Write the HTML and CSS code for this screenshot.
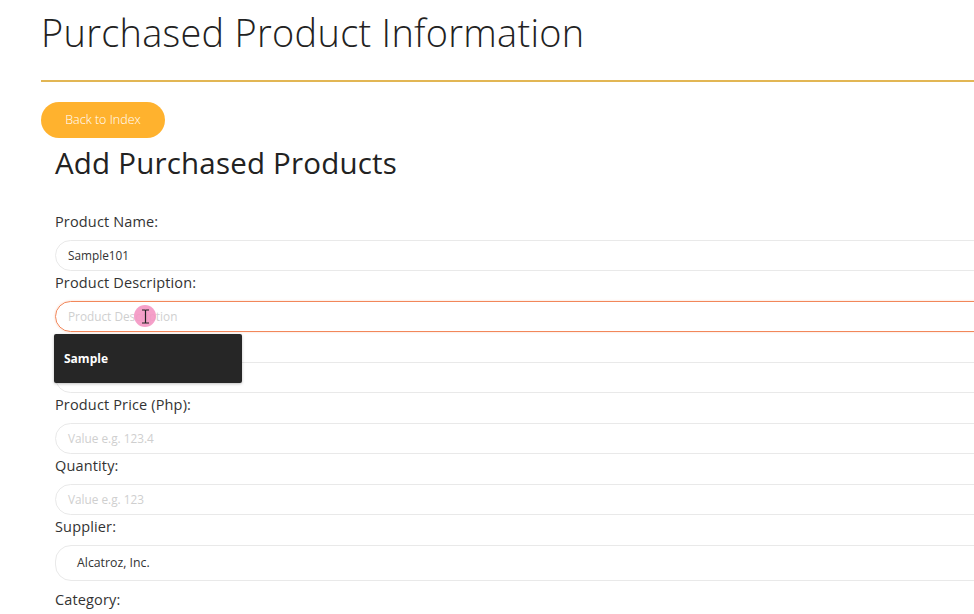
FILE: index.html
```html
<!DOCTYPE html>
<html lang="en">
<head>
<meta charset="utf-8">
<title>Purchased Product Information</title>
<link rel="stylesheet" href="styles.css">
</head>
<body>
<div class="page">
  <h1 class="title">Purchased Product Information</h1>
  <hr class="rule">
  <a class="back-btn" href="#">Back to Index</a>
  <div class="form-wrap">
    <h2 class="subtitle">Add Purchased Products</h2>
    <form class="form">
      <label class="label">Product Name:</label>
      <div class="field">Sample101</div>
      <label class="label">Product Description:</label>
      <div class="field field-focus placeholder desc-field">
        Product Description
        <div class="suggest"><span>Sample</span></div>
        <div class="cursor-dot"></div>
        <svg class="ibeam" width="9" height="15" viewBox="0 0 9 15"><path d="M1 1h2.5a1 1 0 0 1 1 0.6a1 1 0 0 1 1-0.6H8M4.5 1.6v11.8M1 14h2.5a1 1 0 0 0 1-0.6a1 1 0 0 0 1 0.6H8" fill="none" stroke="#222" stroke-width="1.2"/></svg>
      </div>
      <label class="label">&nbsp;</label>
      <div class="field"></div>
      <label class="label">Product Price (Php):</label>
      <div class="field placeholder">Value e.g. 123.4</div>
      <label class="label">Quantity:</label>
      <div class="field placeholder">Value e.g. 123</div>
      <label class="label">Supplier:</label>
      <div class="field select">Alcatroz, Inc.</div>
      <label class="label label-cat">Category:</label>
    </form>
  </div>
</div>
</body>
</html>
```

FILE: styles.css
```css
html, body {
  margin: 0;
  padding: 0;
  overflow: hidden;
  background: #ffffff;
}
body {
  font-family: "Open Sans", "Liberation Sans", sans-serif;
  color: #2b2b2b;
}
.page {
  width: 1100px;
  padding-left: 41px;
  box-sizing: border-box;
}
.title {
  margin: 8px 0 0;
  font-size: 37.9px;
  line-height: 48px;
  font-weight: 300;
  color: #222;
  letter-spacing: 0.3px;
}
.rule {
  margin: 24px 0 0;
  border: 0;
  height: 2px;
  background: #e2b654;
}
.back-btn {
  display: inline-block;
  margin-top: 20px;
  width: 124px;
  height: 36px;
  line-height: 36px;
  text-align: center;
  border-radius: 18px;
  background: #ffb22e;
  color: #fff;
  font-size: 12.5px;
  font-weight: 300;
  text-decoration: none;
}
.form-wrap {
  padding-left: 14px;
}
.subtitle {
  margin: 7px 0 0;
  font-size: 29.5px;
  line-height: 36px;
  font-weight: 400;
  color: #222;
  letter-spacing: 0.2px;
}
.form {
  display: flex;
  flex-direction: column;
  margin-top: 31px;
}
.label {
  display: block;
  font-size: 14.5px;
  line-height: 19px;
  color: #333;
  margin-bottom: 9px;
  letter-spacing: 0.15px;
}
.field {
  position: relative;
  height: 31px;
  box-sizing: border-box;
  border: 1.5px solid #e9e9e9;
  border-radius: 16px;
  padding-left: 12px;
  font-size: 11.8px;
  line-height: 28px;
  color: #333;
  margin-bottom: 2px;
}
.placeholder {
  color: #cfcfcf;
}
.field-focus {
  border-color: #f2875a;
  box-shadow: 0 0 2px rgba(242, 135, 90, 0.4);
}
.select {
  height: 36px;
  line-height: 33px;
  padding-left: 21px;
  font-size: 12.3px;
  color: #333;
  margin-bottom: 9px;
}
.suggest {
  position: absolute;
  left: -2px;
  top: 32px;
  width: 188px;
  height: 49px;
  background: #262626;
  border-radius: 2px;
  box-shadow: 0 1px 3px rgba(0,0,0,0.25);
  z-index: 5;
  display: flex;
  align-items: center;
  padding-left: 10px;
  box-sizing: border-box;
}
.suggest span {
  color: #fff;
  font-size: 12px;
  font-weight: 700;
}
.cursor-dot {
  position: absolute;
  left: 78px;
  top: 3px;
  width: 22px;
  height: 22px;
  border-radius: 50%;
  background: rgba(244, 150, 195, 0.9);
}
.ibeam {
  position: absolute;
  left: 85px;
  top: 7px;
}
```
